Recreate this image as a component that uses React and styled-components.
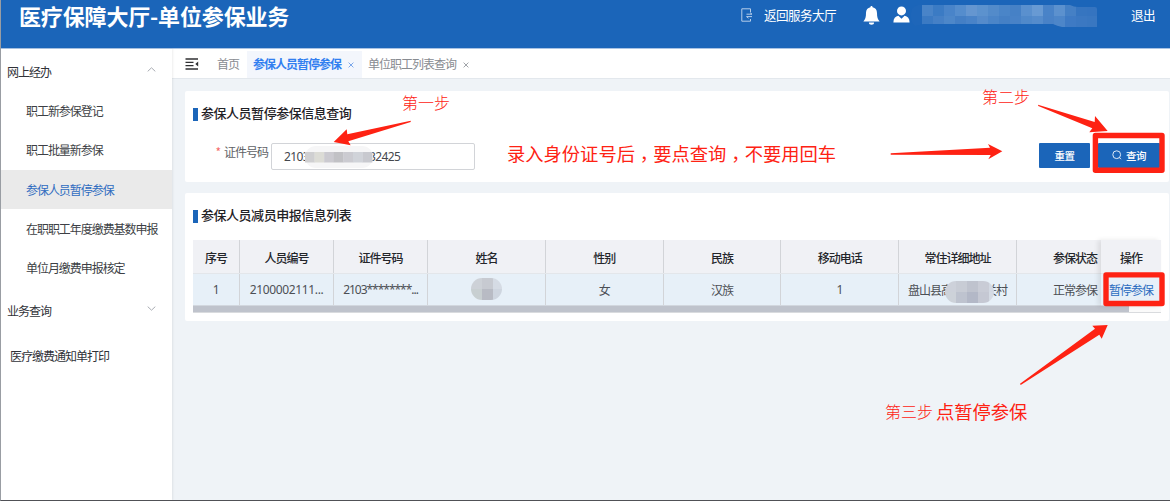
import React from "react";
import styled, { createGlobalStyle } from "styled-components";

const Global = createGlobalStyle`
  *, *::before, *::after { box-sizing: border-box; }
  body {
    margin: 0;
    overflow: hidden;
    font-family: "Noto Sans", "Noto Sans CJK SC", sans-serif;
    font-size: 12px;
    color: #44474d;
  }
`;

const cjk = `font-family: "Noto Sans CJK SC", sans-serif;`;

const Page = styled.div`
  position: relative;
  display: flex;
  flex-direction: column;
  width: 1170px;
  height: 501px;
  overflow: hidden;
  background: #eff3f7;
  border-left: 1px solid #999da3;
  border-bottom: 1px solid #505156;
`;

const Header = styled.header`
  display: flex;
  align-items: flex-start;
  height: 48px;
  flex: none;
  padding: 0 15px 0 18px;
  background: #1b65b9;
  color: #fff;
  ${cjk}
`;

const Brand = styled.h1`
  margin: 0;
  font-size: 22px;
  line-height: 30px;
  font-weight: 700;
  letter-spacing: -0.15px;
  white-space: nowrap;
  flex: 1;
`;

const HeaderItem = styled.div`
  display: flex;
  align-items: center;
  height: ${(p) => (p.$text ? 28 : 30)}px;
  margin-left: ${(p) => p.$gap || 0}px;
  font-size: 12.6px;
  letter-spacing: -0.6px;
  white-space: nowrap;
  svg { display: block; }
`;

const UserName = styled(HeaderItem)`
  height: 32px;
`;

const Body = styled.div`
  display: flex;
  flex: 1;
  min-height: 0;
  border-top: 1px solid #a9c3e4;
`;

const Sidebar = styled.nav`
  width: 171px;
  flex: none;
  padding-top: 2px;
  background: #fff;
  box-shadow: 1px 0 2px rgba(0, 0, 0, 0.07);
  z-index: 1;
  ${cjk}
`;

const MenuGroup = styled.div`
  display: flex;
  align-items: center;
  justify-content: space-between;
  height: ${(p) => p.$height}px;
  padding: 0 16px 0 ${(p) => p.$indent || 6}px;
  letter-spacing: -1px;
  color: #303238;
  svg { margin-top: -3px; }
`;

const MenuItem = styled.div`
  height: 39.3px;
  line-height: 40.4px;
  padding-left: 25px;
  letter-spacing: -1.05px;
  white-space: nowrap;
  color: ${(p) => (p.$active ? "#2f6cc0" : "#3d3f45")};
  background: ${(p) => (p.$active ? "#eaeaea" : "transparent")};
`;

const Main = styled.main`
  flex: 1;
  min-width: 0;
  display: flex;
  flex-direction: column;
`;

const TabBar = styled.div`
  display: flex;
  align-items: center;
  height: 30px;
  flex: none;
  padding-left: 13px;
  background: #fff;
  border-bottom: 1px solid #e3e8ed;
  ${cjk}
`;

const Tab = styled.div`
  display: flex;
  align-items: center;
  gap: 7px;
  height: 27px;
  margin-top: 1px;
  padding: 0 8px 2px 6px;
  font-size: 12px;
  letter-spacing: -1px;
  white-space: nowrap;
  font-weight: ${(p) => (p.$active ? 700 : 400)};
  color: ${(p) => (p.$active ? "#327ff0" : "#888b91")};
  background: ${(p) => (p.$active ? "#f3f6fc" : "transparent")};
  margin-left: ${(p) => p.$gap || 0}px;
  svg { margin-top: 3px; }
`;

const Cards = styled.div`
  display: flex;
  flex-direction: column;
  gap: 11px;
  padding: 12px 1px 0 13px;
`;

const Card = styled.section`
  height: ${(p) => p.$height}px;
  padding: 0 8px;
  background: #fff;
  border-radius: 2px;
`;

const CardTitle = styled.h2`
  display: flex;
  align-items: center;
  gap: 3px;
  height: 14px;
  margin: 16px 0 0;
  padding-bottom: 2px;
  font-size: 13px;
  line-height: 14px;
  font-weight: 500;
  letter-spacing: -0.47px;
  color: #1f2126;
  ${cjk}
  &::before {
    content: "";
    width: 5px;
    height: 13px;
    margin-top: 2px;
    background: #1b65b9;
  }
`;

const Form = styled.div`
  display: flex;
  align-items: flex-start;
  margin-top: 22px;
`;

const Label = styled.label`
  display: flex;
  justify-content: flex-end;
  gap: 4px;
  width: 78px;
  padding-right: 3px;
  line-height: 18px;
  letter-spacing: -1px;
  color: #606266;
  ${cjk}
  i { color: #f56c6c; font-style: normal; }
`;

const Field = styled.div`
  display: flex;
  align-items: center;
  width: 204px;
  height: 27px;
  padding-left: 12px;
  border: 1px solid #d2d4d8;
  border-radius: 2px;
  letter-spacing: -0.6px;
  color: #44474d;
  svg { display: block; margin: 1px 0 0 -4px; z-index: 1; }
  b { font-weight: 400; margin-left: -4px; }
`;

const Actions = styled.div`
  display: flex;
  gap: 8px;
  margin-left: auto;
  padding-right: 1px;
`;

const Button = styled.button`
  display: flex;
  align-items: center;
  justify-content: center;
  gap: 4px;
  width: ${(p) => p.$width}px;
  height: 25px;
  padding: 0 0 1px;
  border: 0;
  border-radius: 1px;
  background: #1b65b9;
  color: #fff;
  font-size: 10.5px;
  font-weight: 500;
  letter-spacing: -0.6px;
  ${cjk}
`;

const TableFrame = styled.div`
  display: flex;
  margin-top: 17px;
  height: 66px;
`;

const ScrollArea = styled.div`
  flex: 1;
  min-width: 0;
  overflow: hidden;
`;

const Row = styled.div`
  display: grid;
  grid-template-columns: ${(p) => p.$columns};
  height: ${(p) => (p.$head ? 34 : 32)}px;
  background: ${(p) => (p.$head ? "#f0f1f5" : "#e7f0f8")};
  border-bottom: 1px solid ${(p) => (p.$head ? "#e3e6ea" : "#d2d7de")};
`;

const Cell = styled.div`
  display: flex;
  align-items: center;
  justify-content: center;
  padding: ${(p) => (p.$head ? "2px 0 0" : p.$latin ? "0" : "0 0 1px")};
  border-right: ${(p) => (p.$last ? 0 : 1)}px solid #d2d4d8;
  white-space: nowrap;
  font-weight: ${(p) => (p.$head ? 500 : 400)};
  letter-spacing: ${(p) => (p.$latin ? p.$track || -0.3 : -1)}px;
  color: ${(p) => (p.$link ? "#2a6cc0" : p.$head ? "#24262b" : "#4c4f55")};
  font-family: ${(p) => (p.$latin ? '"Noto Sans"' : '"Noto Sans CJK SC"')}, sans-serif;
  svg { display: block; }
`;

const Masked = styled.span`
  display: flex;
  align-items: center;
  svg { margin: 5px -9px 0 -7px; z-index: 1; }
`;

const FixedColumn = styled.div`
  width: 60px;
  box-shadow: -3px 0 5px rgba(0, 0, 0, 0.09);
`;

const ScrollTrack = styled.div`
  height: 7px;
  background: #fafafa;
  border-bottom: 1px solid #d9dbde;
  &::before {
    content: "";
    display: block;
    width: 936px;
    height: 6px;
    background: #bfc3cc;
  }
`;

const Arrows = styled.svg`
  position: absolute;
  left: -1px;
  top: 0;
  z-index: 5;
`;

const Note = styled.div`
  position: absolute;
  z-index: 6;
  left: ${(p) => p.$x - 1}px;
  top: ${(p) => p.$y}px;
  font-size: ${(p) => p.$size}px;
  line-height: 24px;
  font-weight: ${(p) => p.$weight || 300};
  color: #fe2213;
  white-space: nowrap;
  ${cjk}
  span {
    display: inline-block;
    font-family: "Noto Sans CJK TC", sans-serif;
    transform: translateY(5px);
  }
`;

const Chevron = ({ up }) => (
  <svg width="9" height="5" viewBox="0 0 9 5" fill="none" stroke="#a8abb2" strokeWidth="1">
    <path d={up ? "M.7 4.4 4.5.8 8.3 4.4" : "M.7.6 4.5 4.2 8.3.6"} />
  </svg>
);

const Close = ({ color }) => (
  <svg width="6" height="6" viewBox="0 0 6 6" stroke={color} strokeWidth="1">
    <path d="M.6.6 5.4 5.4M5.4.6.6 5.4" />
  </svg>
);

const Mosaic = ({ width, height, cell, rows, radius, id, children }) => (
  <svg width={width} height={height} viewBox={`0 0 ${width} ${height}`}>
    <clipPath id={id}>
      {children || <rect width={width} height={height} rx={radius} />}
    </clipPath>
    <g clipPath={`url(#${id})`}>
      {rows.map((row, y) =>
        row.map((fill, x) => (
          <rect key={`${x}-${y}`} x={x * cell} y={y * cell} width={cell + 0.2} height={cell + 0.2} fill={fill} />
        ))
      )}
    </g>
  </svg>
);

const userRows = [
  ["#1e66b9", "#4984c8", "#3b7bc4", "#4984c9", "#558dcd", "#6596d0", "#5c92ce", "#538bca", "#4a85c8", "#4681c6", "#5a90ce", "#689ad3", "#4983c8", "#5c91ce", "#4580c5", "#3675c0", "#3574c0"],
  ["#1e66b9", "#3b7ac3", "#4580c6", "#4d87c9", "#447fc5", "#4983c8", "#558bcb", "#4b85c8", "#4580c5", "#4882c7", "#5089ca", "#558ccc", "#4982c7", "#4d86c9", "#3e7ac4", "#3b78c2", "#3977c1"],
];

const menu = ["职工新参保登记", "职工批量新参保", "参保人员暂停参保", "在职职工年度缴费基数申报", "单位月缴费申报核定"];
const heads = ["序号", "人员编号", "证件号码", "姓名", "性别", "民族", "移动电话", "常住详细地址", "参保状态"];
const columns = "47px 94px 94px repeat(5, 117.8px) 116px";

const cells = [
  { latin: true, value: "1" },
  { latin: true, track: -0.35, value: "2100002111..." },
  { latin: true, track: -1.02, value: "2103********..." },
  {
    value: (
      <Mosaic id="name" width={31} height={22} radius={11} cell={11} rows={[["#cdd1d7", "#c7cad1", "#d5dbe4"], ["#c8cfd1", "#b8bbc4", "#ced5df"]]} />
    ),
  },
  { value: "女" },
  { value: "汉族" },
  { latin: true, value: "1" },
  {
    value: (
      <Masked>
        盘山县高
        <Mosaic id="address" width={49} height={22} radius={11} cell={11} rows={[["#cdd1da", "#c8ccd5", "#bfc3ce", "#c9ccd6", "#d3d9e3"], ["#cdd2d9", "#bec3cf", "#b3b8c7", "#c5c8d3", "#d5dbe4"]]} />
        关村
      </Masked>
    ),
  },
  { value: "正常参保" },
];

export default function App() {
  return (
    <Page>
      <Global />
      <Header>
        <Brand>医疗保障大厅-单位参保业务</Brand>
        <HeaderItem>
          <svg width="12" height="14" viewBox="0 0 12 14" fill="none" stroke="#b5cdea" strokeWidth="1">
            <path d="M9.5 4V.8H.8v12.4h8.7V11M5.5 6.2H11L9 4.6M11 8.6H5.5l2 1.6" />
          </svg>
        </HeaderItem>
        <HeaderItem $text $gap={11}>返回服务大厅</HeaderItem>
        <HeaderItem $gap={27}>
          <svg width="17" height="19" viewBox="0 0 17 19" fill="#fff">
            <path d="M8.5 0c.8 0 1.1.6 1.1 1.3 2.7.5 4.4 2.6 4.4 5.6 0 4.2.7 6.3 2.6 8.5H.4C2.3 13.2 3 11.1 3 6.9c0-3 1.7-5.1 4.4-5.6C7.4.6 7.7 0 8.5 0ZM5.9 16.5h5.2c0 1.3-1 2.3-2.6 2.3s-2.6-1-2.6-2.3Z" />
          </svg>
        </HeaderItem>
        <HeaderItem $gap={13}>
          <svg width="17" height="17" viewBox="0 0 17 17" fill="#fff" transform="translate(0 -1)">
            <circle cx="8.5" cy="4.9" r="4.5" />
            <path d="M.4 16.5c0-3.9 1.9-6.2 5-6.7l3.1 2.9 3.1-2.9c3.1.5 5 2.8 5 6.7Z" />
          </svg>
        </HeaderItem>
        <UserName $gap={1}>
          <Mosaic id="user" width={186} height={22} cell={11} rows={userRows}>
            <path d="M7 0h152q4 2 8 2h17q2 0 2 2v18h-35q-5-1-9-3H12q-4 2-8 2Q0 18 0 12V8Q0 2 7 0Z" />
          </Mosaic>
        </UserName>
        <HeaderItem $text $gap={34}>退出</HeaderItem>
      </Header>

      <Body>
        <Sidebar>
          <MenuGroup $height={40}>网上经办<Chevron up /></MenuGroup>
          {menu.map((name, i) => (
            <MenuItem key={name} $active={i === 2}>{name}</MenuItem>
          ))}
          <MenuGroup $height={46}>业务查询<Chevron /></MenuGroup>
          <MenuGroup $height={44} $indent={9}>医疗缴费通知单打印</MenuGroup>
        </Sidebar>

        <Main>
          <TabBar>
            <svg width="14" height="12" viewBox="0 0 14 12" stroke="#303133" strokeWidth="1.3">
              <path d="M.5 1H13M.5 4.3H8.5M.5 7.7H8.5M.5 11H13" />
              <path d="M13.2 3.6V8.4L10.3 6Z" fill="#303133" stroke="none" />
            </svg>
            <Tab $gap={12}>首页</Tab>
            <Tab $active>参保人员暂停参保 <Close color="#7ba7ea" /></Tab>
            <Tab>单位职工列表查询 <Close color="#a0a3a8" /></Tab>
          </TabBar>

          <Cards>
            <Card $height={91}>
              <CardTitle>参保人员暂停参保信息查询</CardTitle>
              <Form>
                <Label><i>*</i>证件号码</Label>
                <Field>
                  2103
                  <svg width="68" height="24" viewBox="0 0 68 24">
                    <rect y="1" width="68" height="22" rx="11" fill="#f6f6f7" />
                    {["#cfcfd1", "#dcdcd6", "#cbcad0", "#c1c1c5", "#cbcbd1", "#d0d3d9", "#c8c9cf"].map((c, i) => (
                      <rect key={i} x={i * 9.6} y="7" width="9.8" height="10.5" fill={c} />
                    ))}
                  </svg>
                  <b>32425</b>
                </Field>
                <Actions>
                  <Button $width={51}>重置</Button>
                  <Button $width={62}>
                    <svg width="10" height="10" viewBox="0 0 10 10" fill="none" stroke="#dce8f6" strokeWidth="1">
                      <circle cx="4.7" cy="4.7" r="3.9" />
                      <path d="M7.2 7.3 9 9.2" />
                    </svg>
                    查询
                  </Button>
                </Actions>
              </Form>
            </Card>

            <Card $height={128}>
              <CardTitle>参保人员减员申报信息列表</CardTitle>
              <TableFrame>
                <ScrollArea>
                  <Row $head $columns={columns}>
                    {heads.map((h, i) => <Cell key={h} $head $last={i === 8}>{h}</Cell>)}
                  </Row>
                  <Row $columns={columns}>
                    {cells.map((c, i) => <Cell key={i} $latin={c.latin} $track={c.track} $last={i === 8}>{c.value}</Cell>)}
                  </Row>
                </ScrollArea>
                <FixedColumn>
                  <Row $head $columns="1fr"><Cell $head $last>操作</Cell></Row>
                  <Row $columns="1fr"><Cell $link $last>暂停参保</Cell></Row>
                </FixedColumn>
              </TableFrame>
              <ScrollTrack />
            </Card>
          </Cards>
        </Main>
      </Body>

      <Arrows width="1170" height="501" viewBox="0 0 1170 501" fill="#fe2213">
        <path d="M333.7 142 346.7 129.3 347.3 134.3 410.7 120.7V122L348.3 141.3 350.7 145.3Z" />
        <path d="M1107.7 131 1095 116 1094.7 122 1038 104.7 1038.3 106 1092.3 128.3 1089.3 132.3Z" />
        <path d="M1002.3 151.3 988 144 990 147.7 890.7 153.3V154.7L990.7 155 988.3 159.3Z" />
        <path d="M1107.7 325 1092.3 325.7 1095 328.7 1020 383.7 1020.7 385 1099.3 334.7 1101.7 338.7Z" />
        <g fill="none" stroke="#fe2213" strokeWidth="5.4" strokeLinejoin="round">
          <rect x="1095.4" y="135.5" width="66.6" height="34.8" />
          <rect x="1106" y="274.9" width="56" height="28.6" />
        </g>
      </Arrows>
      <Note $x={402} $y={90} $size={16}>第一步</Note>
      <Note $x={982} $y={84} $size={16}>第二步</Note>
      <Note $x={885} $y={399} $size={16}>第三步</Note>
      <Note $x={507} $y={141} $size={18.3} $weight={400}>录入身份证号后<span>，</span>要点查询<span>，</span>不要用回车</Note>
      <Note $x={936} $y={399} $size={18.3} $weight={400}>点暂停参保</Note>
    </Page>
  );
}
